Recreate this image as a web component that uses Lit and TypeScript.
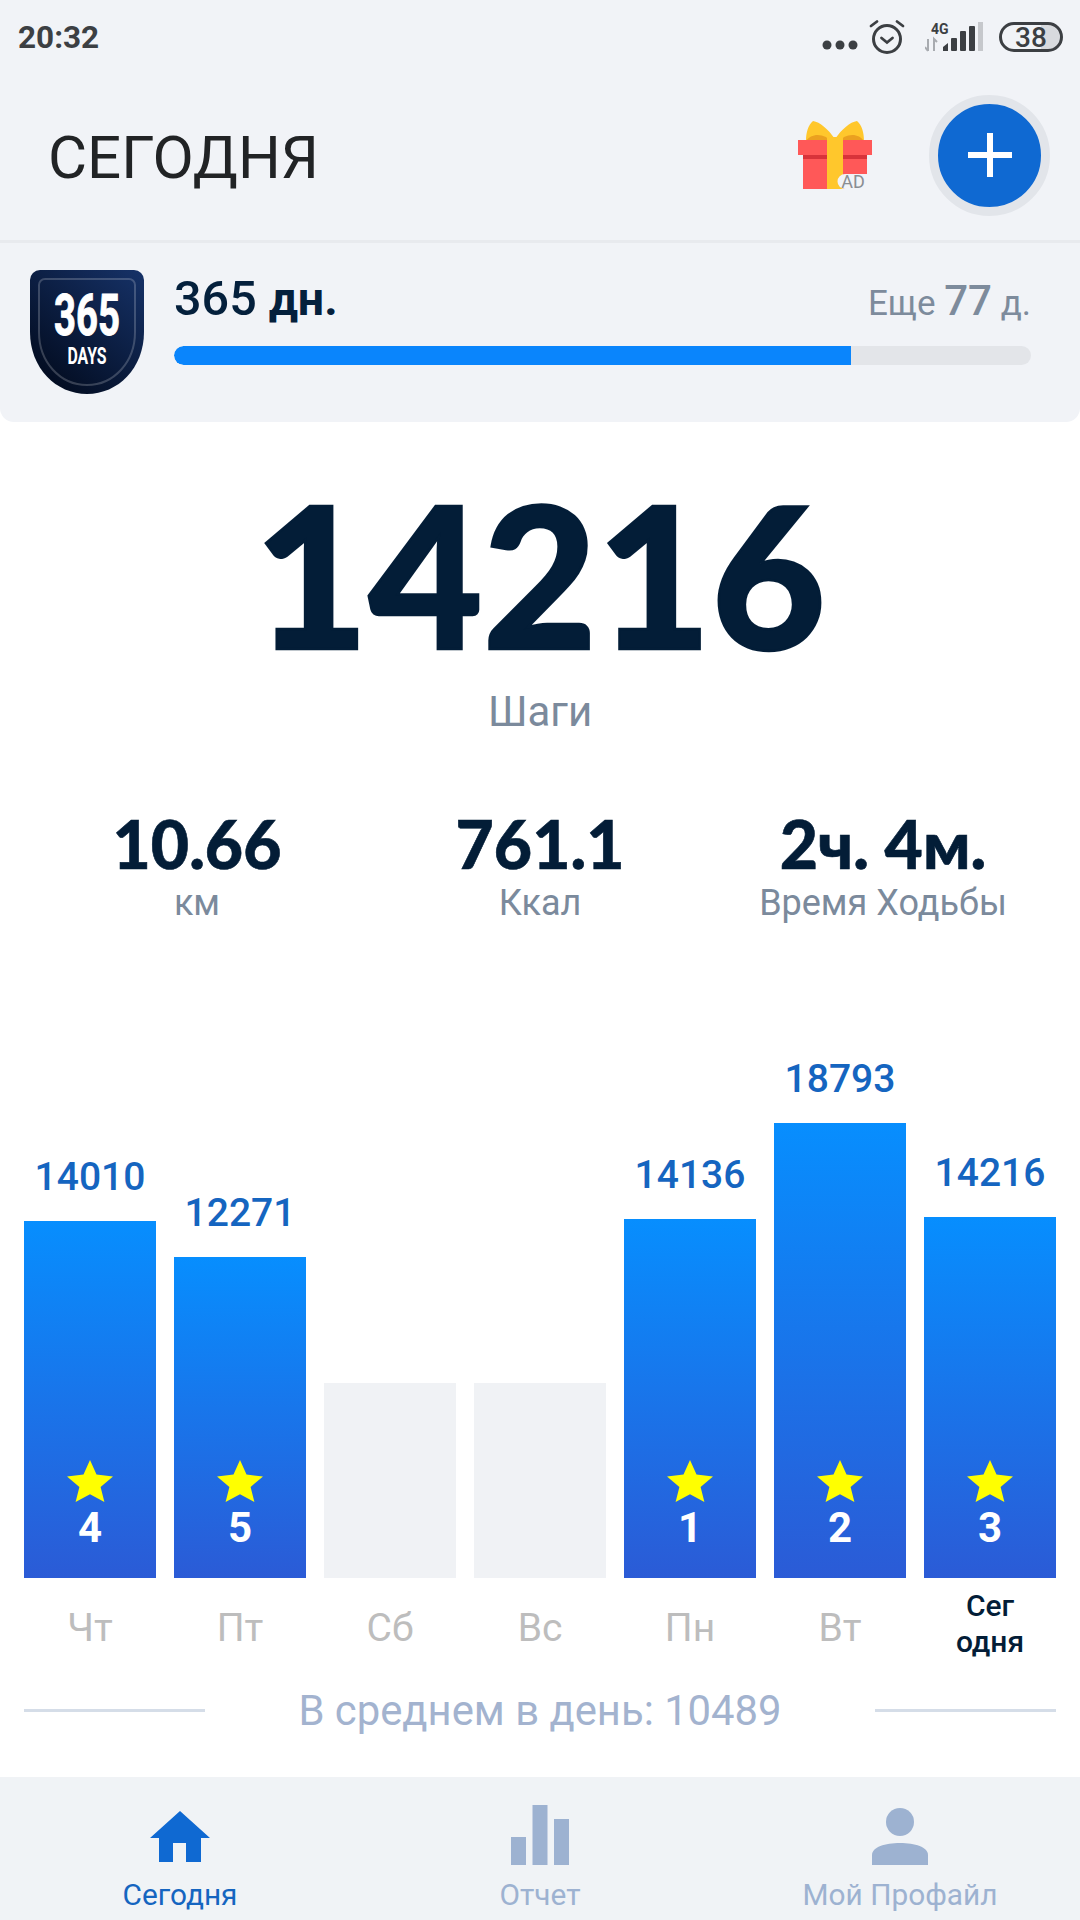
import { LitElement, html, css, svg } from "lit";
import { customElement } from "lit/decorators.js";

type Day = { value?: number; height: number; label: string; rank?: number };

const DAYS: Day[] = [
  { value: 14010, height: 357, label: "Чт", rank: 4 },
  { value: 12271, height: 321, label: "Пт", rank: 5 },
  { height: 195, label: "Сб" },
  { height: 195, label: "Вс" },
  { value: 14136, height: 359, label: "Пн", rank: 1 },
  { value: 18793, height: 455, label: "Вт", rank: 2 },
  { value: 14216, height: 361, label: "Сег одня", rank: 3 },
];

const STATS = [
  { value: "10.66", label: "км" },
  { value: "761.1", label: "Ккал" },
  { value: "2ч. 4м.", label: "Время Ходьбы" },
];

const star = html`<svg class="star" viewBox="0 0 46 42">
  <path fill="#ffff00" d="M23 0 L29.5 14.6 L46 16.4 L33.6 26.9 L37.4 42 L23 34.2 L8.6 42 L12.4 26.9 L0 16.4 L16.5 14.6 Z" />
</svg>`;

const homeIcon = svg`<path fill="#0f69d2" d="M30 6 L60 33 H51 V57 H36 V38 H23 V57 H9 V33 H0 Z" />`;
const chartIcon = svg`<g fill="#9db2d1"><rect x="0" y="32" width="15" height="28" /><rect x="21.5" y="0" width="15" height="60" /><rect x="43" y="14" width="15" height="46" /></g>`;
const profileIcon = svg`<g fill="#9db2d1"><circle cx="29" cy="17" r="14" /><path d="M1 60 V50 C1 42 14 38 29 38 C44 38 57 42 57 50 V60 Z" /></g>`;

@customElement("app-root")
export class AppRoot extends LitElement {
  static styles = css`
    :host {
      display: flex;
      flex-direction: column;
      width: 1080px;
      height: 1920px;
      overflow: hidden;
      background: #fff;
      font-family: Roboto, "Noto Sans", sans-serif;
    }
    .top {
      background: #f1f3f7;
      border-radius: 0 0 14px 14px;
    }
    .status {
      display: flex;
      align-items: center;
      height: 70px;
      padding: 4px 17px 0 18px;
      box-sizing: border-box;
    }
    .time {
      flex: 1;
      font-size: 31.5px;
      font-weight: 700;
      color: #3c3f43;
    }
    .status svg {
      display: block;
    }
    .dots {
      margin-top: 16px;
      margin-right: 11px;
    }
    .alarm {
      margin-right: 20px;
    }
    .net {
      margin-right: 14px;
    }
    .head {
      display: flex;
      align-items: center;
      height: 173px;
      padding: 0 30px 0 48px;
      box-sizing: border-box;
      border-bottom: 3px solid #e8eaee;
    }
    .title {
      flex: 1;
      padding-top: 4px;
      font-size: 60px;
      color: #212325;
    }
    .gift {
      margin-right: 57px;
    }
    .fab {
      display: flex;
      align-items: center;
      justify-content: center;
      width: 103px;
      height: 103px;
      border-radius: 50%;
      background: #0f69d2;
      border: 9px solid #e2e5ea;
    }
    .goal {
      display: flex;
      height: 179px;
      padding: 27px 49px 0 30px;
      box-sizing: border-box;
    }
    .badge {
      flex: none;
      margin-right: 30px;
    }
    .goal-body {
      flex: 1;
    }
    .goal-row {
      display: flex;
      align-items: baseline;
      justify-content: space-between;
      height: 62px;
    }
    .goal-name {
      font-size: 48.5px;
      font-weight: 500;
      color: #04203c;
    }
    .goal-name b {
      font-weight: 700;
      font-size: 46.5px;
    }
    .goal-left {
      font-size: 35px;
      color: #7d8b9c;
    }
    .goal-left b {
      font-weight: 500;
      font-size: 42px;
    }
    .track {
      height: 19px;
      margin-top: 14px;
      border-radius: 10px;
      background: #e3e5e9;
      overflow: hidden;
    }
    .fill {
      height: 100%;
      border-radius: 10px 0 0 10px;
      background: #0a85fc;
    }
    .steps {
      margin-top: 35px;
      text-align: center;
      font-family: Lato, sans-serif;
      font-weight: 900;
      font-size: 197px;
      line-height: 233px;
      color: #031d37;
      -webkit-text-stroke: 2.5px #031d37;
    }
    .steps-label {
      text-align: center;
      font-size: 42px;
      line-height: 44px;
      color: #7b8a9c;
    }
    .stats {
      display: grid;
      grid-template-columns: 394px 292px 394px;
      margin-top: 72px;
      text-align: center;
    }
    .stat-value {
      font-family: Lato, sans-serif;
      font-weight: 900;
      font-size: 66px;
      line-height: 76px;
      color: #031d37;
      -webkit-text-stroke: 0.6px #031d37;
    }
    .stat-label {
      padding-top: 1px;
      font-size: 36px;
      line-height: 40px;
      color: #7b8a9c;
    }
    .chart {
      display: flex;
      align-items: flex-end;
      gap: 18px;
      padding: 0 24px;
      margin-top: auto;
    }
    .day {
      flex: 1;
      display: flex;
      flex-direction: column;
    }
    .value {
      text-align: center;
      font-size: 39px;
      font-weight: 500;
      line-height: 44px;
      margin-bottom: 22px;
      color: #1565c0;
    }
    .bar {
      display: flex;
      flex-direction: column;
      align-items: center;
      justify-content: flex-end;
      padding-bottom: 34px;
      box-sizing: border-box;
      background: linear-gradient(#078efe, #2b5bd6);
    }
    .bar.empty {
      background: #f0f2f5;
    }
    .star {
      display: block;
      width: 46px;
      height: 42px;
      margin-bottom: 10px;
    }
    .rank {
      font-size: 42px;
      font-weight: 700;
      line-height: 32px;
      color: #fff;
    }
    .label {
      display: flex;
      align-items: center;
      justify-content: center;
      height: 98px;
      padding-top: 1px;
      box-sizing: border-box;
      text-align: center;
      font-size: 39px;
      color: #bdbdbd;
    }
    .label.today {
      font-size: 30px;
      font-weight: 500;
      line-height: 36px;
      color: #031d37;
      padding: 0 20px 6px;
    }
    .avg {
      display: flex;
      align-items: center;
      padding: 0 24px;
      height: 68px;
      margin-bottom: 33px;
      font-size: 41.8px;
      color: #a3b3cf;
    }
    .avg span {
      flex: 1;
      text-align: center;
    }
    .avg i {
      width: 181px;
      height: 3px;
      background: #d5dde8;
    }
    .nav {
      display: grid;
      grid-template-columns: repeat(3, 1fr);
      height: 143px;
      padding-top: 28px;
      box-sizing: border-box;
      background: #f0f3f6;
    }
    .tab {
      display: flex;
      flex-direction: column;
      align-items: center;
      font-size: 29.8px;
      color: #9db2d1;
    }
    .tab.on {
      color: #1565c0;
    }
    .tab svg {
      display: block;
      height: 60px;
      margin-bottom: 12px;
    }
  `;

  private statusIcons() {
    return html`
      <svg class="dots" width="36" height="12" viewBox="0 0 36 12">
        <g fill="#3c3f43"><circle cx="5" cy="6" r="4.5" /><circle cx="18" cy="6" r="4.5" /><circle cx="31" cy="6" r="4.5" /></g>
      </svg>
      <svg class="alarm" width="36" height="36" viewBox="0 0 36 36">
        <g fill="none" stroke="#3c3f43" stroke-linecap="round">
          <circle cx="18" cy="20" r="13.5" stroke-width="3" />
          <path stroke-width="2.8" d="M12.5 19 L18 23.5 L23.5 19 M2 7 L8 2.5 M34 7 L28 2.5" />
        </g>
      </svg>
      <svg class="net" width="60" height="40" viewBox="0 -4 60 40">
        <text x="6" y="13" font-family="Roboto" font-weight="700" font-size="14" fill="#3c3f43">4G</text>
        <path fill="none" stroke="#a8abb0" stroke-width="2" d="M3 18 V30 M0 26 L3 30 M9 30 V18 L12 21" />
        <g fill="#3c3f43">
          <path d="M18 30 V26 L23 22 V30 Z" />
          <rect x="26" y="17" width="6" height="13" rx="1" />
          <rect x="35" y="10" width="6" height="20" rx="1" />
          <rect x="44" y="5" width="6" height="25" rx="1" />
        </g>
        <rect x="53" y="1" width="5" height="29" fill="#c6c8cc" />
      </svg>
      <svg class="batt" width="64" height="40" viewBox="0 -5 64 40">
        <path fill="#d8dade" d="M42 3 H50 a12 12 0 0 1 0 24 H42 Z" />
        <rect x="1.5" y="1.5" width="61" height="27" rx="13.5" fill="none" stroke="#3c3f43" stroke-width="3" />
        <text x="32" y="25" text-anchor="middle" font-family="Roboto" font-weight="500" font-size="28" fill="#3c3f43">38</text>
      </svg>
    `;
  }

  private gift() {
    return html`<svg class="gift" width="74" height="76" viewBox="0 -4 74 76">
      <path fill="#ffc72c" d="M37 18 C30 8 22 1 15 0 C10 4 8 12 8 20 H66 C66 12 64 4 59 0 C52 1 44 8 37 18 Z" />
      <path fill="#eba01f" d="M8 20 C12 14 20 12 28 16 L32 20 Z M66 20 C62 14 54 12 46 16 L42 20 Z" />
      <rect x="0" y="19" width="74" height="15" fill="#ff5858" />
      <rect x="5" y="34" width="64" height="34" fill="#ff5858" />
      <rect x="5" y="34" width="64" height="4" fill="#d8333a" />
      <rect x="29" y="16" width="16" height="52" fill="#ffc72c" />
      <path fill="#f1f3f7" d="M47 53 H69 V68 H47 A7.5 7.5 0 0 1 47 53 Z" />
      <text x="55" y="67" text-anchor="middle" font-family="Roboto" font-size="18" fill="#8a8d92">AD</text>
    </svg>`;
  }

  private badge() {
    return html`<svg class="badge" width="114" height="124" viewBox="0 0 114 124">
      <defs>
        <linearGradient id="shield" x1="1" y1="0" x2="0.2" y2="1">
          <stop offset="0" stop-color="#163268" />
          <stop offset="1" stop-color="#020b1e" />
        </linearGradient>
      </defs>
      <path fill="url(#shield)" d="M10 0 H104 a10 10 0 0 1 10 10 V62 C114 98 88 124 57 124 C26 124 0 98 0 62 V10 a10 10 0 0 1 10 -10 Z" />
      <path fill="none" stroke="#ffffff" stroke-opacity="0.2" stroke-width="2" d="M15 9 H99 a6 6 0 0 1 6 6 V62 C105 92 84 115 57 115 C30 115 9 92 9 62 V15 a6 6 0 0 1 6 -6 Z" />
      <text transform="translate(57 65) scale(0.66 1)" text-anchor="middle" font-family="Roboto" font-weight="700" font-size="58" fill="#fff" stroke="#fff" stroke-width="1">365</text>
      <text transform="translate(57 94) scale(0.66 1)" text-anchor="middle" font-family="Roboto" font-weight="700" font-size="24" fill="#fff">DAYS</text>
    </svg>`;
  }

  private day(d: Day) {
    const isToday = d.label.includes(" ");
    return html`<div class="day">
      ${d.value ? html`<div class="value">${d.value}</div>` : ""}
      <div class="bar ${d.rank ? "" : "empty"}" style="height:${d.height}px">
        ${d.rank ? html`${star}<div class="rank">${d.rank}</div>` : ""}
      </div>
      <div class="label ${isToday ? "today" : ""}">${d.label}</div>
    </div>`;
  }

  render() {
    return html`
      <div class="top">
        <div class="status">
          <div class="time">20:32</div>
          ${this.statusIcons()}
        </div>
        <div class="head">
          <div class="title">СЕГОДНЯ</div>
          ${this.gift()}
          <div class="fab">
            <svg width="44" height="44" viewBox="0 0 44 44"><path fill="#fff" d="M19 0 H25 V19 H44 V25 H25 V44 H19 V25 H0 V19 H19 Z" /></svg>
          </div>
        </div>
        <div class="goal">
          ${this.badge()}
          <div class="goal-body">
            <div class="goal-row">
              <div class="goal-name">365 <b>дн.</b></div>
              <div class="goal-left">Еще <b>77</b> д.</div>
            </div>
            <div class="track"><div class="fill" style="width:${(677 / 857) * 100}%"></div></div>
          </div>
        </div>
      </div>
      <div class="steps">14216</div>
      <div class="steps-label">Шаги</div>
      <div class="stats">
        ${STATS.map((s) => html`<div>
          <div class="stat-value">${s.value}</div>
          <div class="stat-label">${s.label}</div>
        </div>`)}
      </div>
      <div class="chart">${DAYS.map((d) => this.day(d))}</div>
      <div class="avg"><i></i><span>В среднем в день: 10489</span><i></i></div>
      <div class="nav">
        <div class="tab on"><svg width="60" viewBox="0 0 60 60">${homeIcon}</svg>Сегодня</div>
        <div class="tab"><svg width="58" viewBox="0 0 58 60">${chartIcon}</svg>Отчет</div>
        <div class="tab"><svg width="58" viewBox="0 0 58 60">${profileIcon}</svg>Мой Профайл</div>
      </div>
    `;
  }
}
